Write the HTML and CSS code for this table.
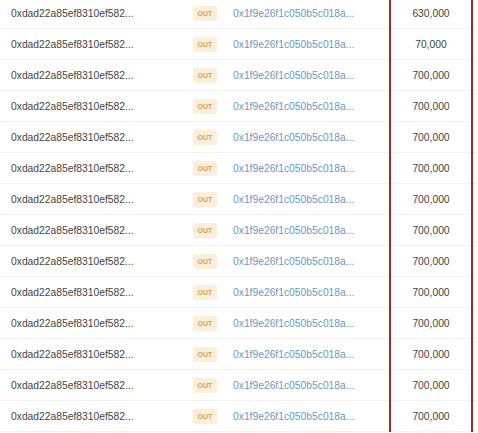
FILE: index.html
```html
<!DOCTYPE html>
<html lang="en">
<head>
  <meta charset="UTF-8" />
  <title>Token Transfers</title>
  <link rel="stylesheet" href="styles.css">
</head>
<body>
  <div class="tx-list">
    <div class="tx-row"><span class="tx-from">0xdad22a85ef8310ef582...</span><span class="tx-dir"><span class="badge">OUT</span></span><a class="tx-to" href="#">0x1f9e26f1c050b5c018a...</a><span class="tx-amount">630,000</span></div>
    <div class="tx-row"><span class="tx-from">0xdad22a85ef8310ef582...</span><span class="tx-dir"><span class="badge">OUT</span></span><a class="tx-to" href="#">0x1f9e26f1c050b5c018a...</a><span class="tx-amount">70,000</span></div>
    <div class="tx-row"><span class="tx-from">0xdad22a85ef8310ef582...</span><span class="tx-dir"><span class="badge">OUT</span></span><a class="tx-to" href="#">0x1f9e26f1c050b5c018a...</a><span class="tx-amount">700,000</span></div>
    <div class="tx-row"><span class="tx-from">0xdad22a85ef8310ef582...</span><span class="tx-dir"><span class="badge">OUT</span></span><a class="tx-to" href="#">0x1f9e26f1c050b5c018a...</a><span class="tx-amount">700,000</span></div>
    <div class="tx-row"><span class="tx-from">0xdad22a85ef8310ef582...</span><span class="tx-dir"><span class="badge">OUT</span></span><a class="tx-to" href="#">0x1f9e26f1c050b5c018a...</a><span class="tx-amount">700,000</span></div>
    <div class="tx-row"><span class="tx-from">0xdad22a85ef8310ef582...</span><span class="tx-dir"><span class="badge">OUT</span></span><a class="tx-to" href="#">0x1f9e26f1c050b5c018a...</a><span class="tx-amount">700,000</span></div>
    <div class="tx-row"><span class="tx-from">0xdad22a85ef8310ef582...</span><span class="tx-dir"><span class="badge">OUT</span></span><a class="tx-to" href="#">0x1f9e26f1c050b5c018a...</a><span class="tx-amount">700,000</span></div>
    <div class="tx-row"><span class="tx-from">0xdad22a85ef8310ef582...</span><span class="tx-dir"><span class="badge">OUT</span></span><a class="tx-to" href="#">0x1f9e26f1c050b5c018a...</a><span class="tx-amount">700,000</span></div>
    <div class="tx-row"><span class="tx-from">0xdad22a85ef8310ef582...</span><span class="tx-dir"><span class="badge">OUT</span></span><a class="tx-to" href="#">0x1f9e26f1c050b5c018a...</a><span class="tx-amount">700,000</span></div>
    <div class="tx-row"><span class="tx-from">0xdad22a85ef8310ef582...</span><span class="tx-dir"><span class="badge">OUT</span></span><a class="tx-to" href="#">0x1f9e26f1c050b5c018a...</a><span class="tx-amount">700,000</span></div>
    <div class="tx-row"><span class="tx-from">0xdad22a85ef8310ef582...</span><span class="tx-dir"><span class="badge">OUT</span></span><a class="tx-to" href="#">0x1f9e26f1c050b5c018a...</a><span class="tx-amount">700,000</span></div>
    <div class="tx-row"><span class="tx-from">0xdad22a85ef8310ef582...</span><span class="tx-dir"><span class="badge">OUT</span></span><a class="tx-to" href="#">0x1f9e26f1c050b5c018a...</a><span class="tx-amount">700,000</span></div>
    <div class="tx-row"><span class="tx-from">0xdad22a85ef8310ef582...</span><span class="tx-dir"><span class="badge">OUT</span></span><a class="tx-to" href="#">0x1f9e26f1c050b5c018a...</a><span class="tx-amount">700,000</span></div>
    <div class="tx-row"><span class="tx-from">0xdad22a85ef8310ef582...</span><span class="tx-dir"><span class="badge">OUT</span></span><a class="tx-to" href="#">0x1f9e26f1c050b5c018a...</a><span class="tx-amount">700,000</span></div>
  </div>
</body>
</html>
```

FILE: styles.css
```css
body {
  margin: 0;
  background-color: #fff;
  font-family: "Liberation Sans", Arial, sans-serif;
  overflow: hidden;
}
.tx-list {
  margin-top: -2px;
}
.tx-row {
  display: grid;
  grid-template-columns: 182px 40px 156px 84px 1fr;
  align-items: center;
  height: 31px;
  padding-left: 11px;
  font-size: 10.3px;
  color: #444;
  border-bottom: 1px solid #f3f3f3;
  box-sizing: border-box;
}
.tx-from {
  white-space: nowrap;
}
.tx-dir {
  display: flex;
}
.badge {
  display: inline-block;
  width: 24px;
  height: 15px;
  line-height: 15px;
  text-align: center;
  font-size: 7px;
  font-weight: bold;
  color: #d8a24c;
  background-color: #fcefd9;
  border-radius: 2px;
}
.tx-to {
  color: #6b98c8;
  text-decoration: none;
  white-space: nowrap;
}
.tx-amount {
  align-self: stretch;
  display: flex;
  align-items: center;
  justify-content: center;
  border-left: 2px solid #a8262e;
  border-right: 2px solid #a8262e;
  margin-bottom: -1px;
  color: #444;
}
```
